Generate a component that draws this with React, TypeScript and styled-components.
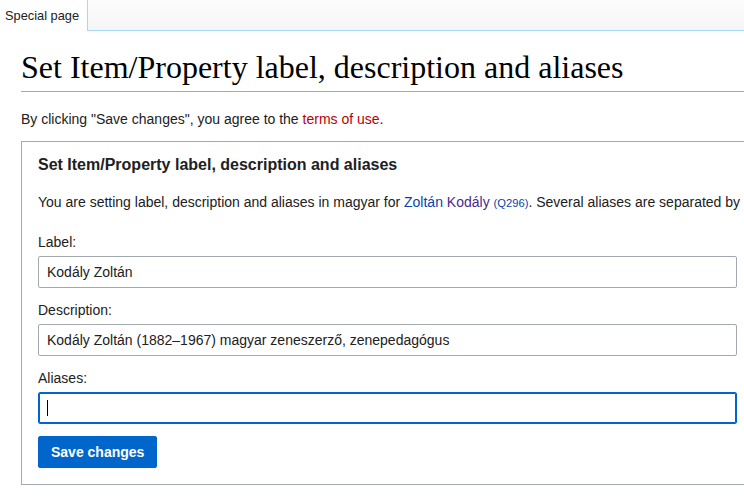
import React from "react";
import styled, { createGlobalStyle } from "styled-components";

const GlobalStyle = createGlobalStyle`
  html, body {
    margin: 0;
    padding: 0;
    background: #ffffff;
    overflow: hidden;
  }
  body {
    font-family: "Liberation Sans", Arial, sans-serif;
    color: #202122;
  }
`;

const Page = styled.div`
  width: 1200px;
`;

const TabBar = styled.div`
  display: flex;
  height: 31px;
`;

const Tab = styled.div`
  box-sizing: border-box;
  width: 87px;
  padding: 8px 0 0 5px;
  font-size: 12.8px;
  line-height: 16px;
  color: #202122;
  background: #ffffff;
`;

const TabFiller = styled.div`
  flex: 1;
  box-sizing: border-box;
  border-left: 1px solid #a7d7f9;
  border-bottom: 1px solid #a7d7f9;
  background: linear-gradient(to bottom, #fcfcfc 0%, #f6f6f6 100%);
`;

const Content = styled.div`
  padding-left: 21px;
`;

const Heading = styled.h1`
  margin: 16px 0 0;
  padding: 0 0 2px;
  font-family: "Liberation Serif", "Times New Roman", serif;
  font-weight: normal;
  font-size: 32px;
  line-height: 1.3;
  color: #000000;
  border-bottom: 1px solid #a2a9b1;
`;

const Notice = styled.p`
  margin: 16px 0 0;
  font-size: 14px;
  line-height: 22.4px;
`;

const Link = styled.a<{ $color: string; $small?: boolean }>`
  color: ${(p) => p.$color};
  text-decoration: none;
  font-size: ${(p) => (p.$small ? "11.2px" : "inherit")};
`;

const Panel = styled.section`
  box-sizing: border-box;
  margin-top: 11px;
  width: 734px;
  border: 1px solid #a2a9b1;
  padding: 9.5px 16px 16px;
`;

const PanelTitle = styled.h2`
  margin: 0;
  font-size: 16px;
  font-weight: bold;
  line-height: 25.6px;
  color: #202122;
`;

const Intro = styled.p`
  margin: 14px 0 0;
  font-size: 14px;
  line-height: 22.4px;
  white-space: nowrap;
`;

const Form = styled.form`
  margin-top: 17.5px;
  display: flex;
  flex-direction: column;
`;

const FieldLabel = styled.label`
  display: block;
  font-size: 14px;
  line-height: 20px;
  margin-bottom: 4px;
  color: #202122;
`;

const InputWrap = styled.div`
  position: relative;
  width: 699px;
  margin: 0 0 12px;
`;

const Input = styled.input<{ $focused?: boolean }>`
  display: block;
  box-sizing: border-box;
  width: 100%;
  height: 32px;
  margin: 0;
  padding: 0 8px;
  font-family: "Liberation Sans", Arial, sans-serif;
  font-size: 14px;
  color: #202122;
  background: #ffffff;
  border: 1px solid ${(p) => (p.$focused ? "#0066cc" : "#a2a9b1")};
  border-radius: 2px;
  box-shadow: ${(p) => (p.$focused ? "inset 0 0 0 1px #0066cc" : "none")};
  outline: none;
`;

const Caret = styled.span`
  position: absolute;
  left: 9px;
  top: 8px;
  width: 1px;
  height: 16px;
  background: #000000;
  pointer-events: none;
`;

const SaveButton = styled.button`
  box-sizing: border-box;
  align-self: flex-start;
  height: 32px;
  padding: 0 12px;
  font-family: "Liberation Sans", Arial, sans-serif;
  font-size: 14px;
  font-weight: bold;
  color: #ffffff;
  background: #0066cc;
  border: 1px solid #0066cc;
  border-radius: 2px;
  cursor: pointer;
`;

export default function App() {
  return (
    <Page>
      <GlobalStyle />
      <TabBar>
        <Tab>Special page</Tab>
        <TabFiller />
      </TabBar>
      <Content>
        <Heading>Set Item/Property label, description and aliases</Heading>
        <Notice>
          By clicking "Save changes", you agree to the{" "}
          <Link href="#" $color="#ba0000">terms of use</Link>.
        </Notice>
        <Panel>
          <PanelTitle>Set Item/Property label, description and aliases</PanelTitle>
          <Intro>
            You are setting label, description and aliases in magyar for{" "}
            <Link href="#" $color="#0645ad">Zoltán</Link>{" "}
            <Link href="#" $color="#4a2a8c">Kodály</Link>{" "}
            <Link href="#" $color="#0645ad" $small>(Q296)</Link>. Several aliases are
            separated by a pipe character.
          </Intro>
          <Form onSubmit={(e) => e.preventDefault()}>
            <FieldLabel htmlFor="label">Label:</FieldLabel>
            <InputWrap>
              <Input id="label" defaultValue="Kodály Zoltán" />
            </InputWrap>
            <FieldLabel htmlFor="description">Description:</FieldLabel>
            <InputWrap>
              <Input
                id="description"
                defaultValue="Kodály Zoltán (1882–1967) magyar zeneszerző, zenepedagógus"
              />
            </InputWrap>
            <FieldLabel htmlFor="aliases">Aliases:</FieldLabel>
            <InputWrap>
              <Input id="aliases" $focused />
              <Caret />
            </InputWrap>
            <SaveButton type="submit">Save changes</SaveButton>
          </Form>
        </Panel>
      </Content>
    </Page>
  );
}
